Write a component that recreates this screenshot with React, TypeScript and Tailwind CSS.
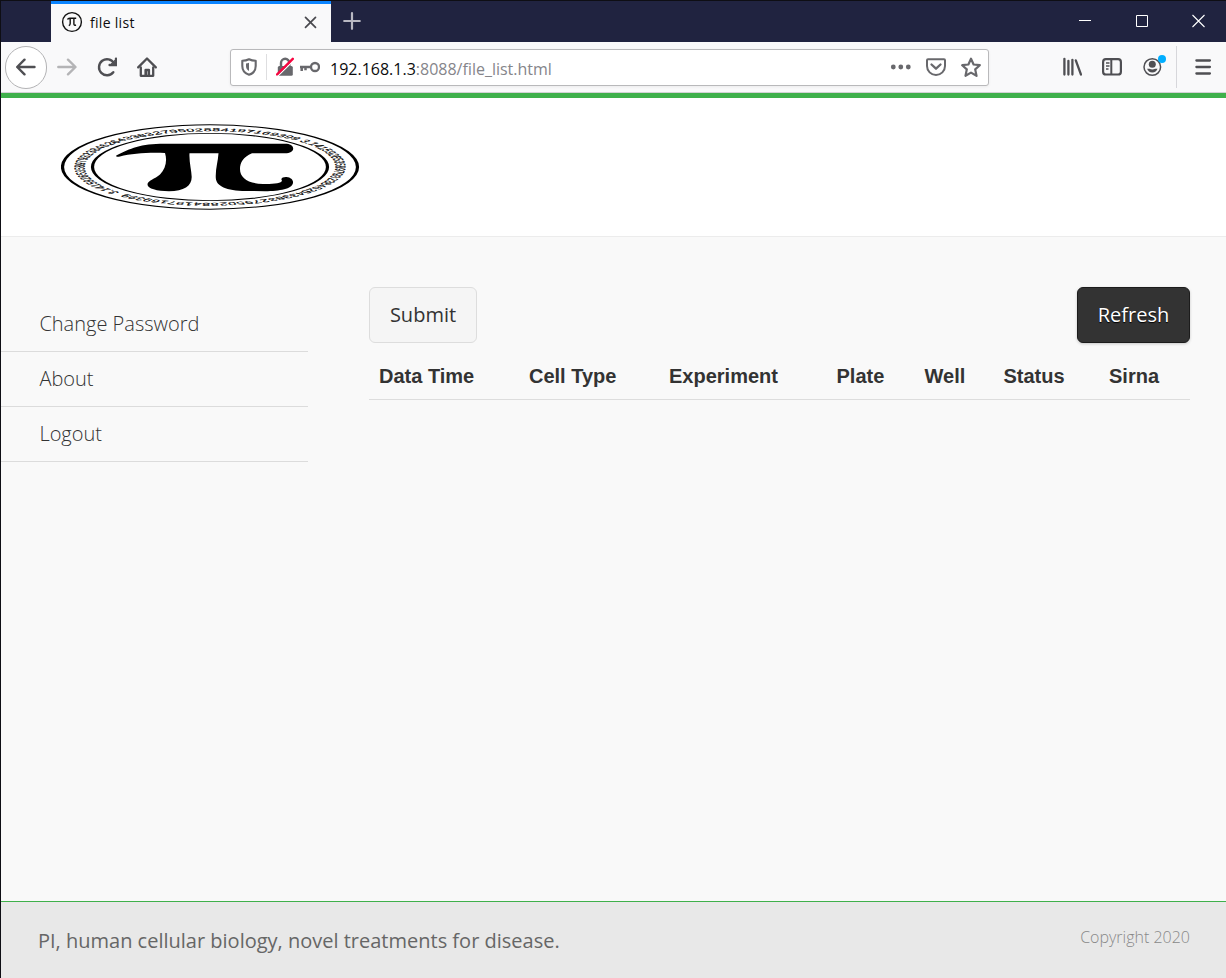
import React from "react";

const PI_DIGITS = "3.141592653589793238462643383279502884197169399";

function PiSeal() {
  return (
    <svg className="block h-[87px] w-[299px]" viewBox="61 124 299 87">
      <defs>
        <path id="digit-ring" d="M 88 -91 A 126.6 126.6 0 0 1 -88 91 A 126.6 126.6 0 0 1 88 -91" />
      </defs>
      <g transform="translate(210 167) scale(1 0.286)">
        <circle r="147.5" fill="none" stroke="#000" strokeWidth="3.2" />
        <circle r="117.5" fill="none" stroke="#000" strokeWidth="3.2" />
        <text fontFamily="'Liberation Sans', sans-serif" fontSize="14.5" fill="#000" stroke="#000" strokeWidth="0.4">
          <textPath href="#digit-ring" startOffset="1" textLength="784">{`${PI_DIGITS}\u00a0\u00a0${PI_DIGITS}`}</textPath>
        </text>
      </g>
      <path d="M116.3 155.5C127 150 138 144.2 160 143.7L285 143.7C290 143.8 293.2 145.5 293.2 148.5C293.2 151.5 290 153.3 285 153.3L252 153.3C243 157 240 163 240 169C240 178 248 183.6 263 184C274 184.2 281.5 183.2 282 180.8C280 177.8 283.5 176.7 286.5 176.9C291 177.3 293.5 180 293 183C292 189 280 191 265 191.2L246 191C226 190.8 216.3 186 215.8 178C215.3 169 218 162 218.5 153.3L189.5 153.3C189 162 191.5 170 191.7 177C191.7 186 184 191 169 191.2C157 191.2 147.5 188.5 147.5 184.5C147.5 180.5 155 179 160 174.5C165.5 169 167.5 161 165 153C148 152.3 132 153.5 120 156.4C117 157 115.5 156.5 116.3 155.5Z" />
    </svg>
  );
}

function TabBar() {
  return (
    <div className="flex h-[41px] shrink-0 bg-[#202340]">
      <div className="ml-[50px] flex w-[280px] items-center border-t-[3px] border-[#0a84ff] bg-[#f9f9fa] pb-[2px] pl-[10px] pr-[13px]">
        <svg className="h-[22px] w-[22px]" viewBox="0 0 22 22" fill="none" stroke="#111">
          <circle cx="11" cy="11" r="9.4" strokeWidth="1.4" />
          <path d="M6.5 8.6Q7 7.3 8.7 7.3H15.2M9.2 7.5V12.5Q9.2 14 7.8 14.6M12.9 7.5V13Q12.9 14.8 15 14" strokeWidth="1.4" />
        </svg>
        <span className="ml-[7px] font-['Open_Sans',sans-serif] text-[14px] tracking-[0.3px] text-[#0c0c0d]">file list</span>
        <svg className="ml-auto h-[14px] w-[14px]" viewBox="0 0 14 14" stroke="#4a4a4f" strokeWidth="1.7" strokeLinecap="round">
          <path d="M1.5 2.3L11.5 12.3M11.5 2.3L1.5 12.3" />
        </svg>
      </div>
      <svg className="ml-3 mt-[11px] h-[18px] w-[18px]" viewBox="0 0 18 18" stroke="#b8b8c2" strokeWidth="2.2" strokeLinecap="round">
        <path d="M9 1.2V16.8M1.2 9H16.8" />
      </svg>
      <div className="ml-auto flex items-start gap-[43px] pr-5 pt-[13px]">
        <svg className="h-[14px] w-[14px]" viewBox="0 0 14 14"><path d="M1 6.5H13" stroke="#fff" /></svg>
        <svg className="h-[14px] w-[14px]" viewBox="0 0 14 14"><path d="M1.5 1.5H12.5V12.5H1.5Z" fill="none" stroke="#fff" /></svg>
        <svg className="h-[14px] w-[14px]" viewBox="0 0 14 14"><path d="M0.5 1L12.5 13M12.5 1L0.5 13" stroke="#fff" strokeWidth="1.1" /></svg>
      </div>
    </div>
  );
}

function Toolbar() {
  return (
    <div className="flex h-[51px] shrink-0 items-center border-b border-[#d2d2d4] bg-[#f9f9fa] text-[#4f4f53]">
      <div className="ml-1 flex h-[43px] w-[42px] shrink-0 items-center justify-center rounded-full border border-[#b3b3b5] bg-white">
        <svg className="h-5 w-5" viewBox="0 0 20 20" fill="none" stroke="currentColor" strokeWidth="2.4" strokeLinecap="round" strokeLinejoin="round"><path d="M18.5 10H2M8.5 2.7L1.2 10L8.5 17.3" /></svg>
      </div>
      <svg className="ml-[10px] h-5 w-5" viewBox="0 0 20 20" fill="none" stroke="#b4b4b6" strokeWidth="2.4" strokeLinecap="round" strokeLinejoin="round"><path d="M1.3 10H18M11 2.7L18.5 10L11 17.3" /></svg>
      <svg className="ml-[20px] h-5 w-5" viewBox="0 0 20 20" fill="none" stroke="currentColor" strokeWidth="2.4" strokeLinecap="round"><path d="M16.3 15.2A8 8 0 1 1 17 6.3" /><path d="M19 1.6V8H12.6" strokeLinejoin="miter" /><path d="M18.5 3V7.5H14Z" fill="currentColor" strokeWidth="1" /></svg>
      <svg className="ml-[20px] h-5 w-5" viewBox="0 0 20 20" fill="none" stroke="currentColor" strokeWidth="2.3" strokeLinecap="round" strokeLinejoin="round"><path d="M1.2 10.4L10 1.5L18.8 10.4" /><path d="M3.8 10.5V18.8H16.2V10.5" /><path d="M8.7 19V13H11.8V19" strokeWidth="2.6" /></svg>
      <div className="ml-[73px] flex h-[37px] w-[759px] shrink-0 items-center rounded-[3px] border border-[#b9b9bb] bg-white text-[#68686c] shadow-[0_1px_3px_rgba(0,0,0,0.06)]">
        <svg className="ml-[10px] h-[18px] w-4 shrink-0" viewBox="0 0 16 18" fill="none" stroke="currentColor"><path d="M8 1.2C10 2.2 12.5 2.7 14.7 2.7V8C14.7 12.5 12 15.5 8 16.8C4 15.5 1.3 12.5 1.3 8V2.7C3.5 2.7 6 2.2 8 1.2Z" strokeWidth="2.1" strokeLinejoin="round" /><path d="M8 4.8V13C6 12 5 10.3 5 8V5.4C6 5.3 7.2 5.1 8 4.8Z" fill="currentColor" stroke="none" /></svg>
        <span className="ml-[9px] h-[26px] w-px bg-[#dedee0]" />
        <svg className="ml-[9px] h-5 w-[18px] shrink-0" viewBox="0 0 18 20"><rect x="1.8" y="9" width="15" height="9.8" rx="1.5" fill="currentColor" /><path d="M5 9V6A4.2 4.2 0 0 1 13.4 6V9" fill="none" stroke="currentColor" strokeWidth="2.4" /><path d="M1.8 19L18.5 2.7" stroke="#fff" strokeWidth="1.2" /><path d="M1 17.5L16.8 1.8" stroke="#f80540" strokeWidth="2.4" strokeLinecap="round" /></svg>
        <svg className="ml-[5px] h-3 w-[21px] shrink-0" viewBox="0 0 21 12" fill="none" stroke="currentColor"><circle cx="16" cy="6" r="4" strokeWidth="2.3" /><path d="M1 6H12M2.7 6V10M6.5 6V9.3" strokeWidth="2.5" /></svg>
        <span className="ml-[10px] whitespace-pre pt-1 font-['Open_Sans',sans-serif] text-[16px] leading-[24px] text-[#0c0c0d]">192.168.1.3<span className="text-[#85858a]">:8088/file_list.html</span></span>
        <div className="ml-auto flex items-center pr-[7px]">
          <svg className="h-5 w-[22px]" viewBox="0 0 22 20" fill="currentColor"><circle cx="4.3" cy="10" r="2.4" /><circle cx="11.8" cy="10" r="2.4" /><circle cx="19.3" cy="10" r="2.4" /></svg>
          <svg className="ml-[14px] h-5 w-[21px]" viewBox="0 0 21 20" fill="none" stroke="currentColor" strokeLinecap="round" strokeLinejoin="round"><path d="M3 2.2H19Q20 2.2 20 3.2V9A9 9 0 0 1 2 9V3.2Q2 2.2 3 2.2Z" strokeWidth="2" /><path d="M6.5 7.5L11 11.7L15.5 7.5" strokeWidth="2.3" /></svg>
          <svg className="ml-[14px] h-[21px] w-[21px]" viewBox="0 0 21 21" fill="none" stroke="currentColor" strokeWidth="2.2" strokeLinejoin="round"><path d="M11 1.7L13.6 7.5L19.8 8.2L15.2 12.4L16.5 18.8L11 15.6L5.5 18.8L6.8 12.4L2.2 8.2L8.4 7.5Z" /></svg>
        </div>
      </div>
      <div className="ml-auto flex h-full items-center">
        <svg className="h-5 w-5" viewBox="0 0 20 20" fill="none" stroke="currentColor" strokeWidth="2.3" strokeLinecap="round"><path d="M2.4 1.8V17.5M6.4 3.8V17.5M10.4 2.8V17.5M13.8 3.4L19 17.5" /></svg>
        <svg className="ml-5 h-5 w-5" viewBox="0 0 20 20" fill="none" stroke="currentColor"><rect x="1.1" y="2.2" width="17.8" height="15.3" rx="2.8" strokeWidth="2.2" /><path d="M9.3 2V18" strokeWidth="2" /><path d="M4 6H7.5M4 9H7.5M4 12H6.5" strokeWidth="1.4" /></svg>
        <div className="relative ml-[21px] h-5 w-5">
          <svg className="h-5 w-5" viewBox="0 0 20 20"><circle cx="9.3" cy="10" r="8.3" fill="none" stroke="currentColor" strokeWidth="1.5" /><circle cx="9.3" cy="7.3" r="3.5" fill="currentColor" /><path d="M4.1 11.8H6.5Q9.3 13.2 12.1 11.8H14.5Q13.3 15.4 9.3 15.4Q5.3 15.4 4.1 11.8Z" fill="currentColor" /></svg>
          <span className="absolute -top-[2px] left-[15px] h-2 w-2 rounded-full bg-[#00aeff]" />
        </div>
        <span className="ml-[13px] h-[42px] w-px bg-[#d7d7db]" />
        <svg className="ml-[17px] mr-[14px] h-5 w-[18px]" viewBox="0 0 18 20" stroke="currentColor" strokeWidth="2.3" strokeLinecap="round"><path d="M2.4 3.5H15.9M2.4 10H15.9M2.4 16.5H15.9" /></svg>
      </div>
    </div>
  );
}

const COLUMNS = [
  { label: "Data Time", width: "w-[150px]" },
  { label: "Cell Type", width: "w-[140px]" },
  { label: "Experiment", width: "w-[167.5px]" },
  { label: "Plate", width: "w-[88px]" },
  { label: "Well", width: "w-[79px]" },
  { label: "Status", width: "w-[105.5px]" },
  { label: "Sirna", width: "w-[91px]" },
];

export default function App() {
  return (
    <div className="flex h-[978px] w-[1226px] flex-col overflow-hidden border-l border-t border-[#0e0e14] bg-[#f9f9f9] font-['Open_Sans',sans-serif] text-[#333]">
      <TabBar />
      <Toolbar />
      <header className="h-[144px] shrink-0 border-b border-t-[5px] border-b-[#ececec] border-t-[#3fb04b] bg-white pl-[60px] pt-[26px]">
        <PiSeal />
      </header>
      <main className="flex flex-1">
        <nav className="w-[307px] pt-[60px]">
          {["Change Password", "About", "Logout"].map((item) => (
            <a key={item} className="block h-[55px] border-b border-[#dcdcdc] pl-[38.4px] text-[20px] font-light leading-[54px]">{item}</a>
          ))}
        </nav>
        <section className="ml-[61px] mr-9 flex-1 pt-[50px]">
          <div className="flex justify-between">
            <button className="h-14 w-[108px] rounded-[6px] border border-[#dddddd] bg-[#f5f5f5] text-[20px]">Submit</button>
            <button className="h-14 w-[113px] rounded-[6px] border border-[#1c1c1c] bg-[#333] text-[20px] text-white shadow-[0_1px_3px_rgba(0,0,0,0.2)] [text-shadow:0_1px_1px_#000]">Refresh</button>
          </div>
          <table className="w-[821px] table-fixed border-collapse font-['Liberation_Sans',sans-serif]">
            <thead>
              <tr className="h-14 border-b border-[#dddddd]">
                {COLUMNS.map((column) => (
                  <th key={column.label} className={`${column.width} pl-[10px] pt-[10px] text-left text-[20px] font-bold`}>{column.label}</th>
                ))}
              </tr>
            </thead>
          </table>
        </section>
      </main>
      <footer className="flex h-[77px] shrink-0 items-start justify-between border-t border-[#3fb04b] bg-[#e8e8e8] pl-[37px] pr-9 text-[#666]">
        <p className="pt-6 text-[20px] leading-[30px]">PI, human cellular biology, novel treatments for disease.</p>
        <p className="pt-[23px] text-[16px] font-light leading-6 text-[#888]">Copyright 2020</p>
      </footer>
    </div>
  );
}
